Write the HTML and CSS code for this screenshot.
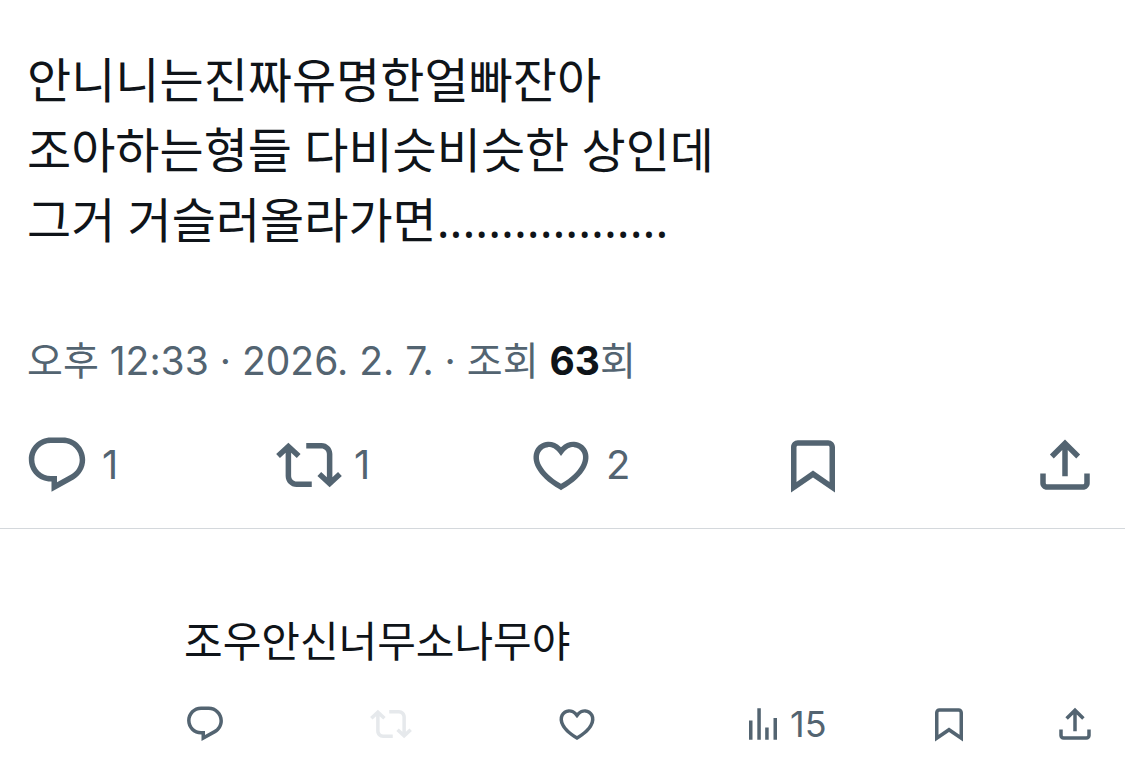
FILE: index.html
```html
<!DOCTYPE html>
<html lang="ko">
<head>
<meta charset="utf-8">
<meta name="viewport" content="width=device-width, initial-scale=1">
<title>게시물</title>
<link rel="stylesheet" href="styles.css">
</head>
<body>
<svg class="sprite" aria-hidden="true">
  <symbol id="reply" viewBox="0 0 24 24"><path d="M1.751 10c0-4.42 3.584-8 8.005-8h4.366c4.49 0 8.129 3.64 8.129 8.13 0 2.96-1.607 5.68-4.196 7.11l-8.054 4.46v-3.69h-.067c-4.49.1-8.183-3.51-8.183-8.01zm8.005-6c-3.317 0-6.005 2.69-6.005 6 0 3.37 2.77 6.08 6.138 6.01l.351-.01h1.761v2.3l5.087-2.81c1.951-1.08 3.163-3.13 3.163-5.36 0-3.39-2.744-6.13-6.129-6.13H9.756z"/></symbol>
  <symbol id="repost" viewBox="0 0 24 24"><path d="M4.5 3.88l4.432 4.14-1.364 1.46L5.5 7.55V16c0 1.1.896 2 2 2H13v2H7.5c-2.209 0-4-1.79-4-4V7.55L1.432 9.48.068 8.02 4.5 3.88zM16.5 6H11V4h5.5c2.209 0 4 1.79 4 4v8.45l2.068-1.93 1.364 1.46-4.432 4.14-4.432-4.14 1.364-1.46 2.068 1.93V8c0-1.1-.896-2-2-2z"/></symbol>
  <symbol id="like" viewBox="0 0 24 24"><path d="M16.697 5.5c-1.222-.06-2.679.51-3.89 2.16l-.805 1.09-.806-1.09C9.984 6.01 8.526 5.44 7.304 5.5c-1.243.07-2.349.78-2.91 1.91-.552 1.12-.633 2.78.479 4.82 1.074 1.97 3.257 4.27 7.129 6.61 3.87-2.34 6.052-4.64 7.126-6.61 1.111-2.04 1.03-3.7.477-4.82-.561-1.13-1.666-1.84-2.908-1.91zm4.187 7.69c-1.351 2.48-4.001 5.12-8.379 7.67l-.503.3-.504-.3c-4.379-2.55-7.029-5.19-8.382-7.67-1.36-2.5-1.41-4.86-.514-6.67.887-1.79 2.647-2.91 4.601-3.01 1.651-.09 3.368.56 4.798 2.01 1.429-1.45 3.146-2.1 4.796-2.01 1.954.1 3.714 1.22 4.601 3.01.896 1.81.846 4.17-.514 6.67z"/></symbol>
  <symbol id="views" viewBox="0 0 24 24"><path d="M8.75 21V3h2v18h-2zM18 21V8.5h2V21h-2zM4 21V10h2v11H4zm9.248 0v-7h2v7h-2z"/></symbol>
  <symbol id="bookmark" viewBox="0 0 24 24"><path fill-rule="evenodd" d="M4 5.500C4 4.120 5.120 3 6.500 3h11C18.880 3 20 4.120 20 5.500V22l-8-5.500L4 22V5.500zM6.500 5c-.28 0-.5.22-.5.5v12.700l6-4.200 6 4.200V5.500c0-.28-.22-.5-.5-.5h-11z"/></symbol>
  <symbol id="share" viewBox="0 0 24 24"><path d="M12 2.700l5.500 5.500-1.410 1.420L13 6.520V16.100h-2V6.520l-3.090 3.100L6.500 8.200 12 2.700zM21 15.100v3.400c0 1.380-1.120 2.500-2.500 2.500h-13C4.120 21 3 19.880 3 18.500v-3.400h2v3.400c0 .28.22.5.5.5h13c.28 0 .5-.22.5-.5v-3.400h2z"/></symbol>
</svg>
<main>
  <article class="post">
    <p class="post-text">안니니는진짜유명한얼빠잔아<br>조아하는형들 다비슷비슷한 상인데<br>그거 거슬러올라가면<span class="dots">..................</span></p>
    <p class="meta">오후 12:33 · 2026. 2. 7. · 조회 <strong>63</strong>회</p>
    <div class="actions">
      <button class="action" type="button" aria-label="답글 1"><svg class="icon"><use href="#reply"/></svg><span>1</span></button>
      <button class="action" type="button" aria-label="재게시 1"><svg class="icon"><use href="#repost"/></svg><span>1</span></button>
      <button class="action" type="button" aria-label="마음에 들어요 2"><svg class="icon"><use href="#like"/></svg><span>2</span></button>
      <button class="action" type="button" aria-label="북마크"><svg class="icon"><use href="#bookmark"/></svg></button>
      <button class="action last" type="button" aria-label="공유"><svg class="icon"><use href="#share"/></svg></button>
    </div>
  </article>
  <article class="comment">
    <p class="comment-text">조우안신너무소나무야</p>
    <div class="actions small">
      <button class="action" type="button" aria-label="답글"><svg class="icon"><use href="#reply"/></svg></button>
      <button class="action" type="button" aria-label="재게시" disabled><svg class="icon"><use href="#repost"/></svg></button>
      <button class="action" type="button" aria-label="마음에 들어요"><svg class="icon"><use href="#like"/></svg></button>
      <button class="action" type="button" aria-label="조회수 15"><svg class="icon"><use href="#views"/></svg><span>15</span></button>
      <div class="tools">
        <button class="action last" type="button" aria-label="북마크"><svg class="icon"><use href="#bookmark"/></svg></button>
        <button class="action last" type="button" aria-label="공유"><svg class="icon"><use href="#share"/></svg></button>
      </div>
    </div>
  </article>
</main>
</body>
</html>
```
FILE: styles.css
```css
* { box-sizing: border-box; }

body {
  margin: 0;
  background: #fff;
  color: #0f1419;
  font-family: "Noto Sans CJK KR", sans-serif;
}

p { margin: 0; }

.sprite {
  position: absolute;
  width: 0;
  height: 0;
}

.post {
  padding: 45px 27px 30px 24px;
  border-bottom: 1px solid #d4d8dc;
}

.post-text {
  padding-left: 3px;
  font-family: Lato, "Noto Sans CJK KR", sans-serif;
  font-size: 48px;
  line-height: 70px;
}

.dots { font-family: "Noto Sans", sans-serif; }

.meta {
  margin-top: 76px;
  padding-left: 3px;
  color: #536471;
  font-family: Inter, "Noto Sans CJK KR", sans-serif;
  font-size: 39px;
  line-height: 60px;
}

.meta strong {
  color: #0f1419;
  font-weight: 700;
}

.actions {
  display: flex;
  margin-top: 41px;
}

.action {
  display: flex;
  flex: 1;
  align-items: center;
  gap: 12px;
  padding: 0;
  border: 0;
  background: none;
  color: #536471;
  font-family: Inter, sans-serif;
  font-size: 40px;
  line-height: 48px;
}

.action.last { flex: none; }

.action:disabled { color: #e6e9ec; }

.icon {
  flex: none;
  width: 66px;
  height: 66px;
  fill: currentColor;
}

.comment {
  padding: 79px 29px 29px 184px;
}

.comment-text {
  font-size: 42px;
  line-height: 62px;
}

.small { margin-top: 33px; }

.small .action {
  gap: 6px;
  font-size: 36px;
  line-height: 42px;
}

.small .icon {
  width: 42px;
  height: 42px;
}

.tools {
  display: flex;
  justify-content: space-between;
  width: 168px;
}
```
